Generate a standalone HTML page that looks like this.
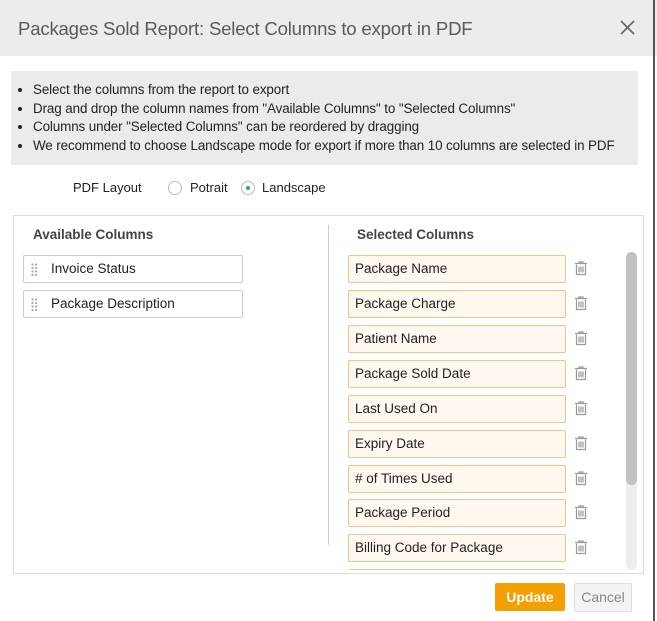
<!DOCTYPE html>
<html><head><style>
body{margin:0;width:657px;height:621px;background:#fff;font-family:"Liberation Sans",sans-serif;position:relative;overflow:hidden;color:#333}
.a{position:absolute}
.hdr{left:0;top:0;width:657px;height:56px;background:#ececec}
.title{left:18px;top:18px;font-size:18.6px;color:#5a5a5a;letter-spacing:-0.2px}
.info{left:11px;top:71px;width:627px;height:94px;background:#ebebeb}
.info ul{margin:0;padding:0 0 0 22px;font-size:13.4px;line-height:18.5px;color:#222;position:absolute;top:10px;white-space:nowrap;letter-spacing:-0.1px}
.panel{left:13px;top:215px;width:629px;height:357px;border:1px solid #ddd}
.item{height:26px;border:1px solid #ccc;border-radius:2px;font-size:13.5px;line-height:26px;color:#222;box-sizing:content-box}
.sel{left:348px;width:210px;padding-left:6px;background:#fff8ee;border-color:#f0c48a}
.h{display:inline-block;width:16px;margin:0 11px 0 7px;vertical-align:middle}
</style></head><body>
<div class="a hdr"></div>
<div class="a title">Packages Sold Report: Select Columns to export in PDF</div>
<svg class="a" style="left:620px;top:20px" width="15" height="15"><path d="M1 1L14 14M14 1L1 14" stroke="#666" stroke-width="1.6"/></svg>
<div class="a info"><ul>
<li>Select the columns from the report to export</li>
<li>Drag and drop the column names from "Available Columns" to "Selected Columns"</li>
<li>Columns under "Selected Columns" can be reordered by dragging</li>
<li>We recommend to choose Landscape mode for export if more than 10 columns are selected in PDF</li></ul></div>
<div class="a" style="left:73px;top:180px;font-size:13px;color:#222">PDF Layout</div>
<div class="a" style="left:168px;top:181px;width:12px;height:12px;border:1px solid #bbb;border-radius:50%"></div>
<div class="a" style="left:190px;top:180px;font-size:13px;color:#222">Potrait</div>
<div class="a" style="left:241px;top:181px;width:12px;height:12px;border:1px solid #bbb;border-radius:50%"><div style="margin:4px;width:4px;height:4px;border-radius:50%;background:#2a9d9d"></div></div>
<div class="a" style="left:262px;top:180px;font-size:13px;color:#222">Landscape</div>
<div class="a panel"></div>
<div class="a" style="left:33px;top:227px;font-size:13.5px;font-weight:bold;color:#444">Available Columns</div>
<div class="a" style="left:357px;top:227px;font-size:13.5px;font-weight:bold;color:#444">Selected Columns</div>
<div class="a" style="left:328px;top:225px;width:1px;height:320px;background:#ccc"></div>
<svg width="0" height="0" style="position:absolute"><defs><g id="d" fill="#aaa"><circle cx="1.5" cy="1.5" r="1.1"/><circle cx="5" cy="1.5" r="1.1"/><circle cx="1.5" cy="5" r="1.1"/><circle cx="5" cy="5" r="1.1"/><circle cx="1.5" cy="8.5" r="1.1"/><circle cx="5" cy="8.5" r="1.1"/><circle cx="1.5" cy="12" r="1.1"/><circle cx="5" cy="12" r="1.1"/></g></defs></svg>
<div class="a item" style="left:23px;top:255px;width:218px"><svg class="a" style="left:7px;top:7px" width="7" height="14"><use href="#d"/></svg><span style="margin-left:27px">Invoice Status</span></div>
<div class="a item" style="left:23px;top:290px;width:218px"><svg class="a" style="left:7px;top:7px" width="7" height="14"><use href="#d"/></svg><span style="margin-left:27px">Package Description</span></div>
<div class="a" style="left:0;top:0;width:657px;height:570px;overflow:hidden">
<div class="a item sel" style="top:255px">Package Name</div>
<div class="a item sel" style="top:290px">Package Charge</div>
<div class="a item sel" style="top:325px">Patient Name</div>
<div class="a item sel" style="top:360px">Package Sold Date</div>
<div class="a item sel" style="top:395px">Last Used On</div>
<div class="a item sel" style="top:430px">Expiry Date</div>
<div class="a item sel" style="top:465px">&#35; of Times Used</div>
<div class="a item sel" style="top:499px">Package Period</div>
<div class="a item sel" style="top:534px">Billing Code for Package</div>
<div class="a item sel" style="top:569px"></div>
</div>
<svg class="a" style="left:574px;top:261px" width="14" height="300" viewBox="0 0 14 300">
<g fill="none" stroke="#999" stroke-width="1.2">
<g id="t"><path d="M1 2.5h12M5 2.5V1h4v1.5M2.5 3.5v10h9v-10M5 5.5v6M7 5.5v6M9 5.5v6"/></g>
<use href="#t" y="35"/><use href="#t" y="70"/><use href="#t" y="105"/><use href="#t" y="140"/><use href="#t" y="175"/><use href="#t" y="210"/><use href="#t" y="244"/><use href="#t" y="279"/>
</g></svg>
<div class="a" style="left:626px;top:252px;width:11px;height:318px;background:#ededed;border-radius:6px"></div>
<div class="a" style="left:626px;top:252px;width:11px;height:233px;background:#c1c1c1;border-radius:6px"></div>
<div class="a" style="left:653px;top:0;width:2px;height:621px;background:#555"></div>
<div class="a" style="left:495px;top:583px;width:70px;height:28px;background:#f5a000;border-radius:2px;color:#fff;font-size:14px;font-weight:bold;text-align:center;line-height:28px">Update</div>
<div class="a" style="left:574px;top:583px;width:56px;height:27px;background:#f3f3f3;border:1px solid #ddd;border-radius:2px;color:#888;font-size:14px;text-align:center;line-height:27px">Cancel</div>
</body></html>
